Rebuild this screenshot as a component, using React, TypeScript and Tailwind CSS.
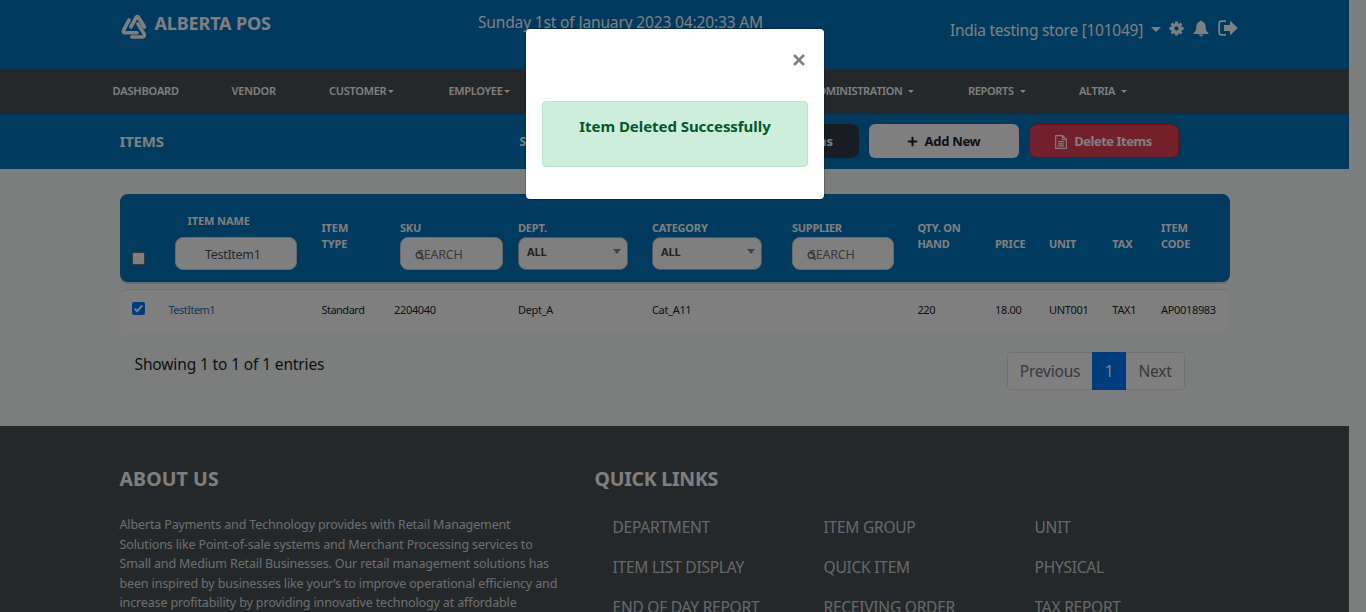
import { FaPlus } from "react-icons/fa";

const Caret = ({ className = "" }: { className?: string }) => (
  <span className={"inline-block border-x-[5px] border-t-[5px] border-x-transparent border-t-white " + className} />
);

const nav: { label: string; width: string; caret: string; track: string }[] = [
  { label: "DASHBOARD", width: "w-[119px]", caret: "", track: "tracking-[-0.15px]" },
  { label: "VENDOR", width: "w-[97.5px]", caret: "", track: "tracking-[-0.2px]" },
  { label: "CUSTOMER", width: "w-[119.5px]", caret: "ml-[2px]", track: "tracking-[-0.25px]" },
  { label: "EMPLOYEE", width: "w-[118px]", caret: "ml-[2px]", track: "tracking-[-0.3px]" },
  { label: "INVENTORY", width: "w-[244.5px]", caret: "ml-[1px]", track: "tracking-[-0.32px]" },
  { label: "ADMINISTRATION", width: "w-[157px]", caret: "ml-[6px]", track: "tracking-[-0.34px]" },
  { label: "REPORTS", width: "w-[111px]", caret: "ml-[6px]", track: "tracking-[-0.34px]" },
  { label: "ALTRIA", width: "w-[60px]", caret: "ml-[6px]", track: "tracking-[-0.34px]" },
];

const Logo = () => (
  <svg viewBox="0 0 26 26" className="h-[26px] w-[26px]" fill="none" stroke="white" strokeLinecap="round" strokeLinejoin="round">
    <path d="M9.9 14 L15 4.8 Q16.3 2.6 17.8 4.8 L23.4 14" strokeWidth="3.7" />
    <path d="M8 7.2 L2.6 17.2 Q1.8 19.8 4.4 19.8 L16 19.7" strokeWidth="3.6" />
    <path d="M16.9 10.8 L23.1 20.8 Q24.2 23.9 21.2 24 L10.8 24" strokeWidth="3.5" />
  </svg>
);

const Gear = () => (
  <svg viewBox="0 0 16 16" className="ml-[8px] mt-[3px] h-[15px] w-[15px]" fill="none" stroke="white">
    <circle cx="8" cy="8" r="4.1" strokeWidth="3.6" />
    <path d="M8 .5V3M8 13V15.5M.5 8H3M13 8H15.5M2.7 2.7L4.5 4.5M11.5 11.5L13.3 13.3M2.7 13.3L4.5 11.5M11.5 4.5L13.3 2.7" strokeWidth="3" />
  </svg>
);

const Bell = () => (
  <svg viewBox="0 0 16 17" className="ml-[9px] mt-[2px] h-[17px] w-4" fill="white">
    <path d="M8 0.4Q9.1 .4 9.1 1.6Q12.6 2.6 12.6 6.5Q12.6 11 15.4 13V14H.6V13Q3.4 11 3.4 6.5Q3.4 2.6 6.9 1.6Q6.9 .4 8 .4ZM6 14.4H10Q9.8 16.4 8 16.4Q6.2 16.4 6 14.4Z" />
  </svg>
);

const SearchBox = ({ className }: { className: string }) => (
  <div className={"relative flex h-[33px] items-center rounded-[8px] border border-[#ced4da] bg-white pl-4 pt-[2px] " + className}>
    <svg viewBox="0 0 12 12" className="absolute left-[14px] top-[13px] h-[10px] w-[10px]" fill="none" stroke="#777" strokeWidth="1.7">
      <circle cx="5" cy="5" r="3.6" />
      <path d="M7.8 7.8 L10.8 10.8" />
    </svg>
    <span className="text-[12.5px] tracking-[-0.2px] text-[#6c757d]">SEARCH</span>
  </div>
);

const SelectBox = () => (
  <div className="flex h-[33px] w-[110px] justify-between rounded-[8px] border border-[#aaa] bg-white pl-2 pr-[6px]">
    <span className="pt-[6px] text-[11px] font-bold leading-4 tracking-[-0.1px] text-[#444]">ALL</span>
    <span className="mt-[11px] h-0 border-x-4 border-t-5 border-x-transparent border-t-[#888]" />
  </div>
);

const Col = ({ w, children }: { w: string; children?: React.ReactNode }) => <div className={"shrink-0 whitespace-nowrap " + w}>{children}</div>;

const links = [
  ["DEPARTMENT", "ITEM GROUP", "UNIT"],
  ["ITEM LIST DISPLAY", "QUICK ITEM", "PHYSICAL"],
  ["END OF DAY REPORT", "RECEIVING ORDER", "TAX REPORT"],
];

const about = [
  "Alberta Payments and Technology provides with Retail Management",
  "Solutions like Point-of-sale systems and Merchant Processing services to",
  "Small and Medium Retail Businesses. Our retail management solutions has",
  "been inspired by businesses like your’s to improve operational efficiency and",
  "increase profitability by providing innovative technology at affordable",
];

export default function App() {
  return (
    <div className="relative h-[612px] w-[1366px] overflow-hidden bg-[#f8fbfa] font-['Noto_Sans','Open_Sans',sans-serif]">
      <div className="flex h-full w-[1349px] flex-col">
        <header className="flex h-[69px] shrink-0 bg-[#0074bc] text-white">
          <div className="flex w-[478px] pl-[121px] pt-[13px]">
            <Logo />
            <span className="ml-[7.5px] mt-[-2px] text-[18px] font-bold leading-6 tracking-[-0.15px]">ALBERTA POS</span>
          </div>
          <div className="w-[472px] pt-[10px] text-[15.5px] leading-6 tracking-[-0.15px]">Sunday 1st of January 2023 04:20:33 AM</div>
          <div className="flex pt-[18px]">
            <span className="whitespace-nowrap text-[15.5px] leading-6 tracking-[-0.26px]">India testing store [101049]</span>
            <Caret className="ml-[8px] mt-[9px] h-0" />
            <Gear />
            <Bell />
            <svg viewBox="0 0 20 16" className="ml-[9px] mt-[2px] h-4 w-5" fill="white">
              <path d="M8 1.2H3.5Q1.2 1.2 1.2 3.7V12.3Q1.2 14.8 3.5 14.8H8" fill="none" stroke="white" strokeWidth="1.8" />
              <path d="M6 5H12V.6L19.7 8L12 15.4V11H6Z" />
            </svg>
          </div>
        </header>
        <nav className="flex h-[45px] shrink-0 items-center bg-[#495057] pl-[112.5px] text-[11px] font-semibold text-white">
          {nav.map((n) => (
            <div key={n.label} className={"flex shrink-0 items-center whitespace-nowrap " + n.width + " " + n.track}>
              {n.label}
              {n.caret && <span className={"mb-px inline-block border-x-[3px] border-t-[3px] border-x-transparent border-t-white " + n.caret} />}
            </div>
          ))}
        </nav>
        <section className="flex h-[55px] shrink-0 items-center bg-[#0074bc] pb-px pl-[119.5px] font-bold text-white">
          <h1 className="w-[400px] text-[15px] tracking-[-0.2px]">ITEMS</h1>
          <span className="w-[189.5px] pt-px text-[12px]">Show Items</span>
          <div className="flex h-[34px] w-[150px] items-center justify-end rounded-[8px] bg-[#2f3b47] pr-[26px] pt-px text-[13px]">All Items</div>
          <div className="ml-[10px] flex h-[34px] w-[150px] items-center justify-center rounded-[6px] bg-white pr-px pt-[2px] text-[13px] tracking-[-0.3px] text-[#1c2228]">
            <FaPlus className="mb-px mr-[7px] h-[11px] w-[11px]" />Add New
          </div>
          <div className="ml-[10px] flex h-[34px] w-[150px] items-center justify-center rounded-[8px] border border-[#d91e32] bg-[#e74154] pr-px pt-[2px] text-[13px] tracking-[-0.5px]">
            <svg viewBox="0 0 12 14" className="mb-px mr-[7px] h-[14px] w-3" fill="none" stroke="white" strokeWidth="1.2">
              <path d="M.7 .7H7.6L11.3 4.3V13.3H.7ZM7.4 .7V4.5H11.3M3 6.7H9M3 8.8H9M3 10.9H9" />
            </svg>
            Delete Items
          </div>
        </section>
        <main className="h-[257px] shrink-0 pl-[120px] pt-[25px]">
          <div className="flex h-[88px] w-[1110px] rounded-[8px] bg-[#0074bc] pl-3 text-[11px] font-bold leading-4 text-white shadow-[0_2px_1px_#d6dad9]">
            <Col w="w-[43px]"><span className="mt-[58px] block h-[13px] w-[13px] rounded-[2px] border border-[#767676] bg-white" /></Col>
            <Col w="w-[146.4px]">
              <div className="ml-[12.5px] mt-[19px] tracking-[-0.08px]">ITEM NAME</div>
              <div className="mt-2 flex h-[33px] w-[122px] items-center rounded-[8px] border border-[#ced4da] bg-white pl-[29px] pt-[2px] text-[12.5px] font-normal tracking-[-0.3px] text-[#495057]">TestItem1</div>
            </Col>
            <Col w="w-[78.6px]"><div className="mt-[26px] tracking-[-0.1px]">ITEM<br />TYPE</div></Col>
            <Col w="w-[118px]"><div className="mt-[26px] mb-px tracking-[-0.2px]">SKU</div><div className="font-normal"><SearchBox className="w-[103px]" /></div></Col>
            <Col w="w-[134px]"><div className="mt-[26px] mb-px tracking-[-0.2px]">DEPT.</div><SelectBox /></Col>
            <Col w="w-[140px]"><div className="mt-[26px] mb-px tracking-[-0.2px]">CATEGORY</div><SelectBox /></Col>
            <Col w="w-[125.4px]"><div className="mt-[26px] mb-px tracking-[-0.25px]">SUPPLIER</div><div className="font-normal"><SearchBox className="w-[102px]" /></div></Col>
            <Col w="w-[77.6px]"><div className="mt-[26px] tracking-[-0.2px]">QTY. ON<br />HAND</div></Col>
            <Col w="w-[54px]"><div className="mt-[42px] tracking-[-0.2px]">PRICE</div></Col>
            <Col w="w-[63.4px]"><div className="mt-[42px] tracking-[-0.2px]">UNIT</div></Col>
            <Col w="w-[48.6px]"><div className="mt-[42px] tracking-[-0.2px]">TAX</div></Col>
            <Col w="w-[60px]"><div className="mt-[26px] tracking-[-0.1px]">ITEM<br />CODE</div></Col>
          </div>
          <div className="mt-[7px] flex h-[42px] w-[1110px] items-center rounded-[8px] border-t border-[#dee2e6] bg-white pl-3 text-[11px] tracking-[-0.32px] text-[#212529]">
            <Col w="w-[36.4px]">
              <svg viewBox="0 0 13 13" className="mb-[5px] h-[13px] w-[13px]">
                <rect width="13" height="13" rx="2" fill="#0075ff" />
                <path d="M2.8 6.8L5.2 9.3L10.2 3.3" fill="none" stroke="white" strokeWidth="2" />
              </svg>
            </Col>
            <Col w="w-[153px]"><span className="tracking-[-0.5px] text-[#286fb7]">TestItem1</span></Col>
            <Col w="w-[72.6px]"><span className="tracking-[-0.5px]">Standard</span></Col>
            <Col w="w-[124px]">2204040</Col>
            <Col w="w-[134px]">Dept_A</Col>
            <Col w="w-[265.4px]">Cat_A11</Col>
            <Col w="w-[77.6px]">220</Col>
            <Col w="w-[54px]">18.00</Col>
            <Col w="w-[63.4px]">UNT001</Col>
            <Col w="w-[48.6px]">TAX1</Col>
            <Col w="w-[60px]">AP0018983</Col>
          </div>
          <div className="mt-[21px] flex w-[1065px] justify-between pl-[14.5px] text-[15.5px] leading-6">
            <span className="tracking-[-0.13px] text-[#212529]">Showing 1 to 1 of 1 entries</span>
            <div className="flex h-[38px] rounded-[4px] border border-[#dee2e6] bg-white tracking-[-0.2px] text-[#6c757d]">
              <span className="flex w-[84px] items-center justify-center">Previous</span>
              <span className="my-[-1px] flex w-[34px] items-center justify-center bg-[#007bff] text-white">1</span>
              <span className="flex w-[58px] items-center justify-center">Next</span>
            </div>
          </div>
        </main>
        <footer className="flex h-[186px] shrink-0 overflow-hidden bg-[#495057] pl-[119.5px] text-white">
          <div className="w-[475px] shrink-0 pt-[40px]">
            <h2 className="text-[19.5px] font-bold leading-[26px] tracking-[0.1px]">ABOUT US</h2>
            <div className="mt-[23px] whitespace-nowrap text-[12.5px] leading-[19.5px] tracking-[-0.14px] text-[#dcdddf]">
              {about.map((t) => <div key={t}>{t}</div>)}
            </div>
          </div>
          <div className="pt-[40px]">
            <h2 className="text-[19.5px] font-bold leading-[26px] tracking-[-0.25px]">QUICK LINKS</h2>
            <div className="ml-[18px] mt-[15px] grid grid-cols-[211px_211px_211px] text-[15.5px] leading-[40px] tracking-[-0.23px] text-[#cfd1d3]">
              {links.flat().map((t) => <div key={t}>{t}</div>)}
            </div>
          </div>
        </footer>
      </div>
      <div className="absolute inset-0 bg-black/50" />
      <div role="dialog" className="absolute left-[526px] top-[29px] h-[170px] w-[298px] rounded-[4px] bg-white px-4 shadow-[0_0_0_1px_rgba(0,0,0,0.2)]">
        <div className="flex h-[72px] justify-end pr-[3px] pt-[25px]">
          <svg viewBox="0 0 12 12" className="h-3 w-3" stroke="#808080" strokeWidth="2.5"><path d="M1 1L11 11M11 1L1 11" /></svg>
        </div>
        <div className="h-[66px] rounded-[4px] border border-[#b8e8cb] bg-[#cceedb] pt-[13px] text-center text-[15px] font-bold leading-[22px] tracking-[-0.05px] text-[#00592b]">Item Deleted Successfully</div>
      </div>
    </div>
  );
}
